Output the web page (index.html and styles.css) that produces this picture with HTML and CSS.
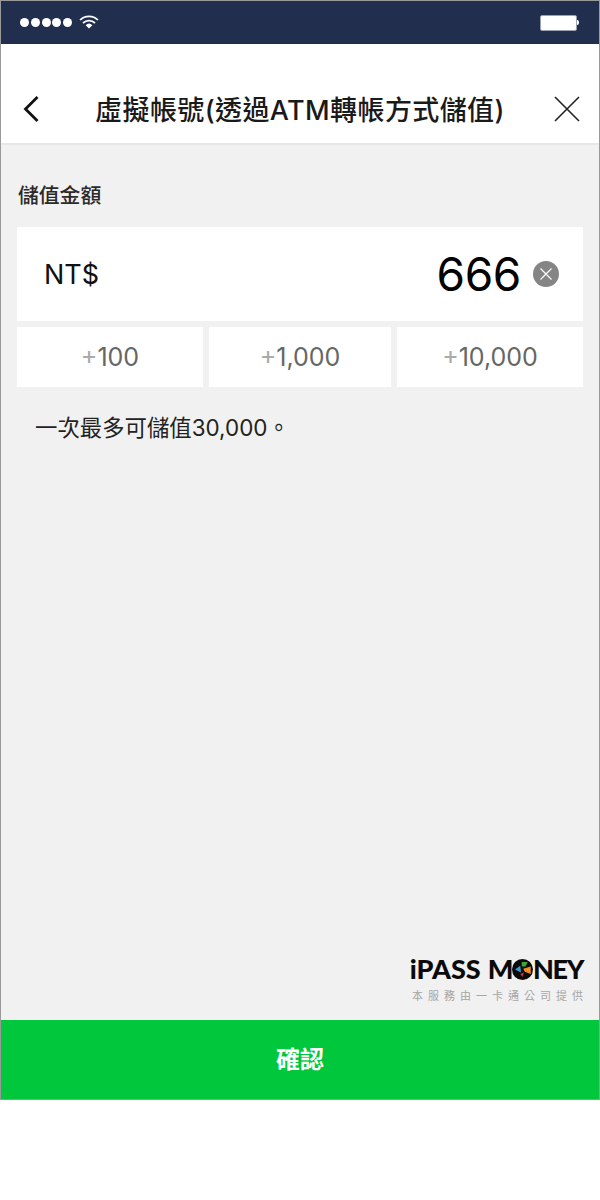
FILE: index.html
```html
<html>
    <head>
        <title>虛擬帳號</title>
        <meta charset="utf-8">
        <link rel="stylesheet" href="styles.css">
    </head>
    <body>
        <div class="phone">
            <div class="status-bar">
                <div class="signal">
                    <span class="dot"></span><span class="dot"></span><span class="dot"></span><span class="dot"></span><span class="dot"></span>
                    <svg class="wifi" width="20" height="14" viewBox="0 0 20 14">
                        <path d="M1 5 A13 13 0 0 1 19 5" fill="none" stroke="#fff" stroke-width="1.7"/>
                        <path d="M4 8 A9 9 0 0 1 16 8" fill="none" stroke="#fff" stroke-width="1.7"/>
                        <path d="M6.6 10.2 A5 5 0 0 1 13.4 10.2 L10 13.6 Z" fill="#fff"/>
                    </svg>
                </div>
                <div class="battery"><div class="battery-body"></div><div class="battery-tip"></div></div>
            </div>
            <div class="header">
                <svg class="back" width="18" height="28" viewBox="0 0 18 28">
                    <path d="M15.5 2 L3.5 14 L15.5 26" fill="none" stroke="#111" stroke-width="2.8"/>
                </svg>
                <h1 class="title">虛擬帳號(透過ATM轉帳方式儲值)</h1>
                <svg class="close" width="26" height="26" viewBox="0 0 26 26">
                    <path d="M1 1 L25 25 M25 1 L1 25" fill="none" stroke="#222" stroke-width="1.6"/>
                </svg>
            </div>
            <div class="content">
                <div class="label">儲值金額</div>
                <div class="amount-box">
                    <span class="currency">NT$</span>
                    <div class="amount-right">
                        <span class="amount">666</span>
                        <svg class="clear" width="26" height="26" viewBox="0 0 26 26">
                            <circle cx="13" cy="13" r="13" fill="#858585"/>
                            <path d="M7.5 7.5 L18.5 18.5 M18.5 7.5 L7.5 18.5" stroke="#fff" stroke-width="1.2"/>
                        </svg>
                    </div>
                </div>
                <div class="quick-row">
                    <div class="quick"><span class="plus">+</span>100</div>
                    <div class="quick"><span class="plus">+</span>1,000</div>
                    <div class="quick"><span class="plus">+</span>10,000</div>
                </div>
                <p class="note">一次最多可儲值30,000。</p>
                <div class="brand">
                    <div class="brand-name">
                        <span class="brand-word">iPASS</span>
                        <span class="brand-money">M<svg class="brand-o" width="21" height="21" viewBox="0 0 28 28">
                            <circle cx="14" cy="14" r="14" fill="#0a0a0a"/>
                            <path d="M13 4 L21 4 L18 10 L13 10 Z" fill="#3fa535"/>
                            <path d="M4 14 L11 9 L12 18 Z" fill="#2a9fd8"/>
                            <path d="M15 13 L25 10 L25 20 L17 17 Z" fill="#f28c1e"/>
                            <path d="M11 20 L16 18 L14 24 Z" fill="#d8332a"/>
                        </svg>NEY</span>
                    </div>
                    <div class="brand-sub">本服務由一卡通公司提供</div>
                </div>
            </div>
            <div class="confirm">確認</div>
        </div>
    </body>
</html>
```

FILE: styles.css
```css
html{
    background-color: #fff;
}
body{
    margin: 0;
    font-family: "Inter", "Liberation Sans", "Noto Sans CJK TC", sans-serif;
}
.phone{
    display: flex;
    flex-direction: column;
    box-sizing: border-box;
    width: 600px;
    height: 1100px;
    border: 1px solid #999;
    background-color: #f1f1f1;
}
.status-bar{
    display: flex;
    justify-content: space-between;
    align-items: center;
    height: 43px;
    flex-shrink: 0;
    padding: 0 20px 0 19px;
    background-color: #212e4d;
}
.signal{
    display: flex;
    align-items: center;
    gap: 1.75px;
}
.dot{
    width: 9px;
    height: 9px;
    border-radius: 50%;
    background-color: #fff;
}
.wifi{
    margin-left: 5px;
    margin-bottom: 2px;
}
.battery{
    display: flex;
    align-items: center;
}
.battery-body{
    box-sizing: border-box;
    width: 37px;
    height: 16px;
    border: 1px solid #9aa2b4;
    border-radius: 2px;
    background-color: #fff;
}
.battery-tip{
    width: 2px;
    height: 5px;
    border-radius: 0 2px 2px 0;
    background-color: #fff;
}
.header{
    display: flex;
    justify-content: space-between;
    align-items: center;
    box-sizing: border-box;
    height: 101px;
    flex-shrink: 0;
    padding: 30px 19px 0 21px;
    background-color: #fff;
    border-bottom: 2px solid #e6e6e6;
}
.title{
    margin: 0 0 0 6px;
    font-size: 27px;
    font-weight: 500;
    letter-spacing: 0.4px;
    color: #1a1a1a;
    white-space: nowrap;
}
.content{
    display: flex;
    flex-direction: column;
    flex: 1;
    padding: 0 16px;
}
.label{
    margin-top: 38px;
    margin-left: 1px;
    font-size: 20.8px;
    line-height: 26px;
    font-weight: 500;
    color: #2a2a2a;
}
.amount-box{
    display: flex;
    justify-content: space-between;
    align-items: center;
    height: 94px;
    margin-top: 18px;
    padding: 0 24px 0 27px;
    background-color: #fff;
}
.currency{
    font-size: 27px;
    color: #111;
}
.amount-right{
    display: flex;
    align-items: center;
    gap: 12px;
}
.amount{
    font-size: 46px;
    letter-spacing: -0.4px;
    color: #000;
}
.quick-row{
    display: grid;
    grid-template-columns: 186px 182px 186px;
    gap: 6px;
    margin-top: 6px;
}
.quick{
    height: 60px;
    line-height: 60px;
    text-align: center;
    font-size: 25px;
    color: #666;
    background-color: #fff;
}
.plus{
    color: #aaa;
}
.note{
    margin: 26px 0 0 18px;
    font-size: 22.4px;
    line-height: 30px;
    color: #222;
}
.brand{
    margin-top: auto;
    margin-bottom: 16px;
    text-align: right;
}
.brand-name{
    display: flex;
    justify-content: flex-end;
    align-items: center;
    gap: 7px;
    font-family: "Lato", "Liberation Sans", sans-serif;
    font-size: 27px;
    line-height: 26px;
    font-weight: 900;
    color: #0a0a0a;
}
.brand-word{
    letter-spacing: 0;
}
.brand-money{
    display: flex;
    align-items: center;
    letter-spacing: -1.4px;
}
.brand-sub{
    margin-top: 6px;
    margin-right: -5px;
    font-size: 11px;
    line-height: 16px;
    letter-spacing: 5px;
    color: #a6a6a6;
}
.confirm{
    height: 79px;
    flex-shrink: 0;
    line-height: 79px;
    text-align: center;
    font-size: 24px;
    font-weight: 700;
    color: #fff;
    background-color: #00c73c;
}
```
